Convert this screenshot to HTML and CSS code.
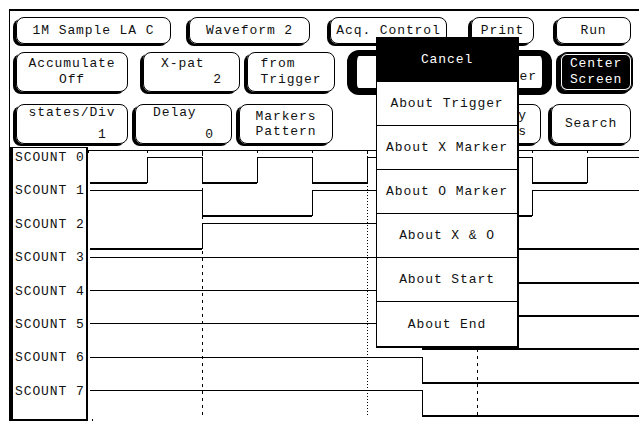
FILE: index.html
```html
<!DOCTYPE html>
<html lang="en">
<head>
    <meta charset="UTF-8">
    <meta name="viewport" content="width=device-width, initial-scale=1.0">
    <title>Waveform 2</title>
    <link rel="stylesheet" href="styles.css">
</head>
<body>
    <div class="screen">
        <div class="controls">
            <div class="row row-top">
                <div class="btn b-sample">1M Sample LA C</div>
                <div class="btn b-wave">Waveform 2</div>
                <div class="btn b-acq">Acq. Control</div>
                <div class="btn b-print">Print</div>
                <div class="btn b-run">Run</div>
            </div>
            <div class="row row-mid">
                <div class="btn b-accum"><span>Accumulate</span><span>Off</span></div>
                <div class="btn b-xpat"><span>X-pat  </span><span>      2</span></div>
                <div class="btn b-from"><span>from   </span><span>Trigger</span></div>
                <div class="btn-frame"><span>er</span></div>
                <div class="btn b-center"><span>Center</span><span>Screen</span></div>
            </div>
            <div class="row row-low">
                <div class="btn split b-states"><span>states/Div</span><span>        1 </span></div>
                <div class="btn split b-delay"><span>Delay  </span><span>      0</span></div>
                <div class="btn b-markers"><span>Markers</span><span>Pattern</span></div>
                <div class="btn b-display"><span>y</span><span>s</span></div>
                <div class="btn b-search">Search</div>
            </div>
        </div>

        <div class="wave-area">
            <div class="labels">
                <div class="sig">SCOUNT 0</div>
                <div class="sig">SCOUNT 1</div>
                <div class="sig">SCOUNT 2</div>
                <div class="sig">SCOUNT 3</div>
                <div class="sig">SCOUNT 4</div>
                <div class="sig">SCOUNT 5</div>
                <div class="sig">SCOUNT 6</div>
                <div class="sig">SCOUNT 7</div>
            </div>
            <svg class="waves" width="551" height="277" viewBox="88 144 551 277">
                <!-- time axis with tick marks -->
                <path class="axis" d="M88 147.5 H639" />
                <path class="axis" d="M88.5 147 V150 M147.5 147 V150 M202.5 147 V150 M257.5 147 V150 M312.5 147 V150 M367.5 147 V150 M422.5 147 V150 M477.5 147 V150 M532.5 147 V150 M587.5 147 V150" />

                <!-- markers -->
                <path class="dash" d="M202.5 150 V414" />
                <path class="dash" d="M477.5 150 V414" />
                <path class="dots" d="M367.5 150 V414" />
                <path class="dots-wide" d="M92 418.5 H639" />
                <path class="axis" d="M92.5 416 V419" />

                <!-- SCOUNT 0..7 -->
                <path class="wave" d="M90 179.5 H147.5 V154.5 H202.5 V179.5 H257.5 V154.5 H312.5 V179.5 H367.5 V154.5 H422.5 V179.5 H477.5 V154.5 H532.5 V179.5 H587.5 V154.5 H639" />
                <path class="wave" d="M90 187.5 H202.5 V212.5 H312.5 V187.5 H422.5 V212.5 H532.5 V187.5 H639" />
                <path class="wave" d="M90 245.5 H202.5 V220.5 H422.5 V245.5 H639" />
                <path class="wave" d="M90 254.5 H422.5 V279.5 H639" />
                <path class="wave" d="M90 287.5 H422.5 V312.5 H639" />
                <path class="wave" d="M90 320.5 H422.5 V345.5 H639" />
                <path class="wave" d="M90 354.5 H422.5 V379.5 H639" />
                <path class="wave" d="M90 387.5 H422.5 V412.5 H639" />

                <!-- low levels are drawn heavier -->
                <path class="low" d="M90 180.5 H147 M202 180.5 H257 M312 180.5 H367 M422 180.5 H477 M532 180.5 H587" />
                <path class="low" d="M202 213.5 H312 M422 213.5 H532" />
                <path class="low" d="M90 246.5 H202 M422 246.5 H639" />
                <path class="low" d="M422 280.5 H639 M422 313.5 H639 M422 346.5 H639 M422 380.5 H639 M422 413.5 H639" />
            </svg>
        </div>

        <div class="popup">
            <div class="item item-cancel">Cancel</div>
            <div class="item">About Trigger</div>
            <div class="item">About X Marker</div>
            <div class="item">About O Marker</div>
            <div class="item">About X &amp; O</div>
            <div class="item">About Start</div>
            <div class="item">About End</div>
        </div>
    </div>
</body>
</html>
```

FILE: styles.css
```css
body {
    margin: 0;
    background-color: #fff;
    font-family: "Liberation Mono", "DejaVu Sans Mono", monospace;
    font-size: 13px;
    letter-spacing: 0.9px;
    color: #111;
}

.screen {
    position: relative;
    margin: 9px 0 0 9px;
    height: 410px;
    border-top: 2px solid #000;
    border-left: 1px solid #000;
    overflow: hidden;
}

.controls {
    padding-top: 6px;
}

.row {
    display: flex;
    align-items: flex-start;
}

.row-top {
    margin-bottom: 8px;
}

.row-mid {
    margin-bottom: 9px;
}

.btn {
    box-sizing: border-box;
    display: flex;
    flex-direction: column;
    justify-content: center;
    align-items: center;
    border: 1px solid #000;
    border-radius: 8px;
    box-shadow: -3px 2px 0 #000;
    white-space: pre;
    line-height: 16px;
}

.row-top .btn {
    height: 27px;
}

.row-mid .btn,
.row-low .btn {
    height: 40px;
}

.btn.split {
    justify-content: space-between;
}

/* row 1 */
.b-sample  { margin-left: 6px;  width: 155px; }
.b-wave    { margin-left: 18px; width: 121px; }
.b-acq     { margin-left: 20px; width: 117px; }
.b-print   { margin-left: 24px; width: 63px; }
.b-run     { margin-left: 22px; width: 75px; }

/* row 2 */
.b-accum   { margin-left: 6px;  width: 112px; }
.b-xpat    { margin-left: 15px; width: 97px; }
.b-from    { margin-left: 7px;  width: 88px; }
.b-center  {
    margin-left: 7px;
    width: 74px;
    background-color: #000;
    color: #fff;
    box-shadow: -3px 2px 0 #000, inset 0 0 0 1px #000, inset 0 0 0 2px #fff;
}

.btn-frame {
    box-sizing: border-box;
    display: flex;
    flex-direction: column;
    justify-content: flex-end;
    align-items: flex-end;
    margin-left: 12px;
    margin-top: -2px;
    width: 205px;
    height: 45px;
    padding: 0 5px 3px 0;
    border: solid #000;
    border-width: 6px 10px 7px 10px;
    border-radius: 12px;
    white-space: pre;
    line-height: 16px;
}

/* row 3 */
.b-states  { margin-left: 6px;  width: 112px; }
.b-delay   { margin-left: 7px;  width: 97px; }
.b-markers { margin-left: 7px;  width: 94px; line-height: 15px; }
.b-display { margin-left: 111px; width: 97px; align-items: flex-end; padding-right: 13px; }
.b-search  { margin-left: 10px; width: 80px; }

/* waveform display */
.wave-area {
    display: flex;
    margin-top: 3px;
}

.labels {
    box-sizing: border-box;
    width: 78px;
    height: 275px;
    border: solid #000;
    border-width: 1px 2px 3px 3px;
    padding-left: 2px;
}

.sig {
    height: 33.375px;
    line-height: 20px;
    white-space: pre;
}

.waves {
    display: block;
    flex: none;
    shape-rendering: crispEdges;
}

.axis,
.wave,
.low {
    fill: none;
    stroke: #000;
    stroke-width: 1;
}

.dash {
    fill: none;
    stroke: #000;
    stroke-width: 1;
    stroke-dasharray: 3 4;
}

.dots {
    fill: none;
    stroke: #000;
    stroke-width: 1;
    stroke-dasharray: 1 2;
}

.dots-wide {
    fill: none;
    stroke: #000;
    stroke-width: 1;
    stroke-dasharray: 1 3;
}

/* pop-up menu */
.popup {
    position: absolute;
    left: 366px;
    top: 26px;
    width: 143px;
    box-sizing: border-box;
    background-color: #fff;
    border: 1px solid #000;
    border-right-width: 2px;
    border-bottom-width: 2px;
}

.item {
    box-sizing: border-box;
    height: 44px;
    display: flex;
    align-items: center;
    justify-content: center;
    border-bottom: 1px solid #000;
    white-space: pre;
}

.item:last-child {
    border-bottom: none;
}

.item-cancel {
    background-color: #000;
    color: #fff;
}
```
